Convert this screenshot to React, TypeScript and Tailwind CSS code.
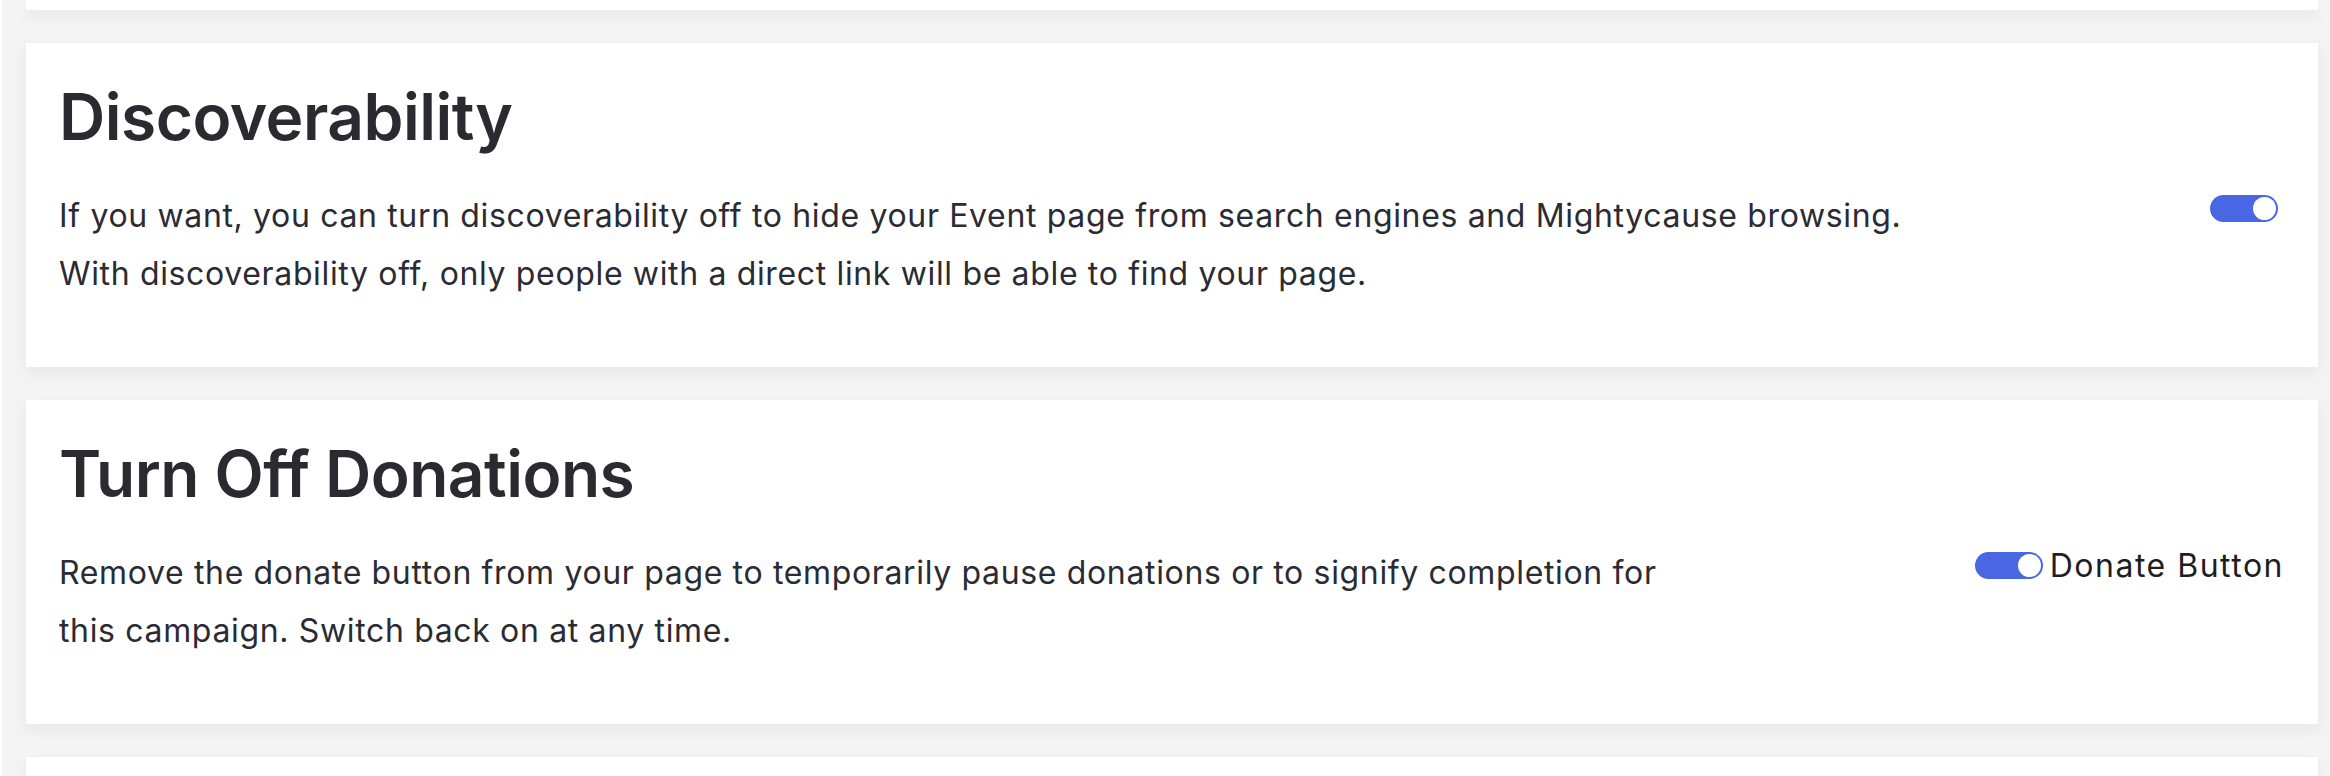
import React from 'react';

function Toggle({ className = '' }: { className?: string }) {
    return (
        <span className={`inline-flex items-center justify-end w-[68px] h-[27px] rounded-full bg-[#4a67e3] p-[2px] shrink-0 ${className}`}>
            <span className="block w-[23px] h-[23px] rounded-full bg-white" />
        </span>
    );
}

function SettingCard({
    title,
    children,
    control,
    textWidth = '',
}: {
    title: string;
    children: React.ReactNode;
    control: React.ReactNode;
    textWidth?: string;
}) {
    return (
        <section className="bg-white h-[324px] ml-[24px] mr-[12px] pl-[33px] pr-[34px] pt-[42px] shadow-[0_6px_14px_rgba(0,0,0,0.05)]">
            <h2 className="text-[64px] leading-none font-semibold text-[#2a2a30] tracking-[-0.5px]">{title}</h2>
            <div className="flex justify-between items-start mt-[38px]">
                <p className={`text-[32px] leading-[58px] tracking-[0.65px] text-[#2b2b33] ${textWidth}`}>{children}</p>
                <div className="mt-[8px]">{control}</div>
            </div>
        </section>
    );
}

export default function App() {
    return (
        <div
            className="h-[776px] overflow-hidden bg-[#f3f3f3] border-l-2 border-white"
            style={{ fontFamily: 'Inter, "Noto Sans", sans-serif' }}
        >
            <div className="flex flex-col gap-[33px]">
                <div className="bg-white h-[10px] ml-[24px] mr-[12px] shadow-[0_6px_14px_rgba(0,0,0,0.05)]" />

                <SettingCard title="Discoverability" control={<Toggle className="mr-[6px]" />}>
                    <span className="whitespace-nowrap">
                        If you want, you can turn discoverability off to hide your Event page from search engines and Mightycause browsing.
                    </span>
                    <br />
                    With discoverability off, only people with a direct link will be able to find your page.
                </SettingCard>

                <SettingCard
                    title="Turn Off Donations"
                    textWidth="max-w-[1650px]"
                    control={
                        <div className="flex items-center gap-[7px]">
                            <Toggle />
                            <span className="text-[32px] leading-[27px] tracking-[1.5px] text-[#1e1e22]">Donate Button</span>
                        </div>
                    }
                >
                    Remove the donate button from your page to temporarily pause donations or to signify completion for this campaign. Switch back on at any time.
                </SettingCard>

                <div className="bg-white h-[60px] ml-[24px] mr-[12px] shadow-[0_6px_14px_rgba(0,0,0,0.05)]" />
            </div>
        </div>
    );
}
